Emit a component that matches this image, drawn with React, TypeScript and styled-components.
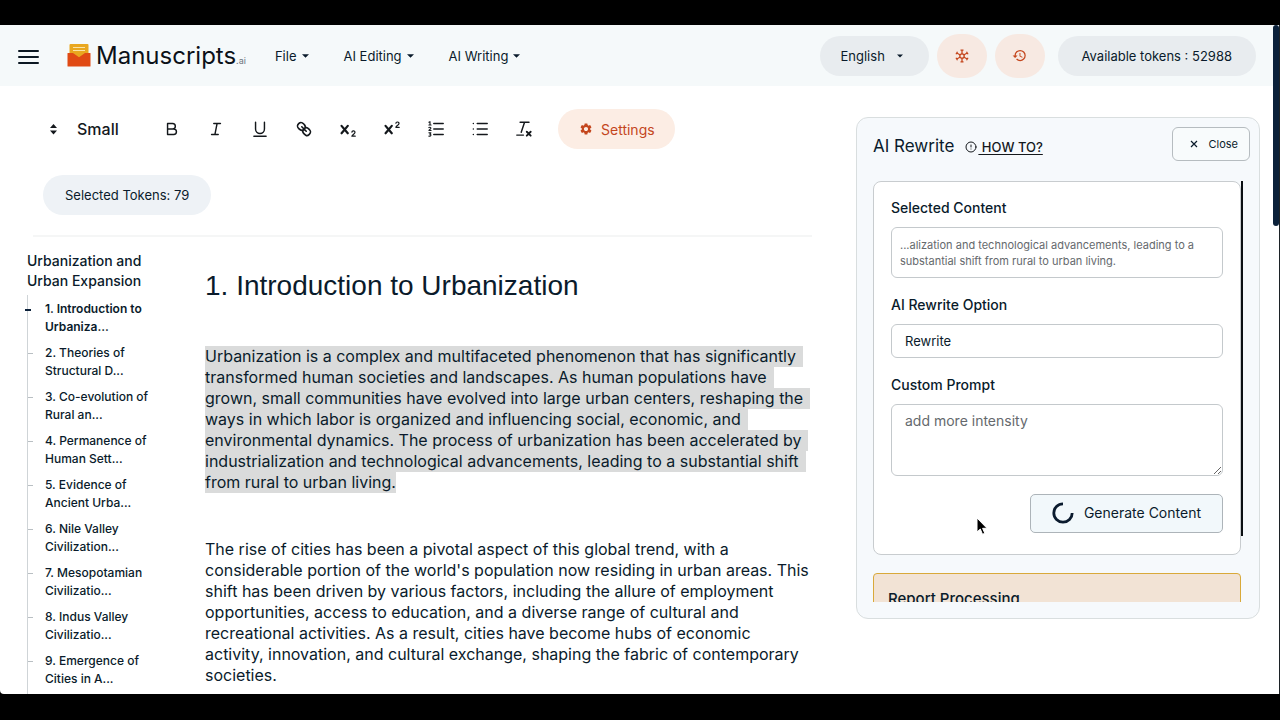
import React from "react";
import styled, { createGlobalStyle, css } from "styled-components";
import { MdHistory, MdSettings } from "react-icons/md";
import { LuCircleAlert } from "react-icons/lu";

const GlobalStyle = createGlobalStyle`
  *, *::before, *::after { box-sizing: border-box; }
  html, body, #root { height: 100%; }
  body {
    margin: 0;
    background: #000;
    color: #0a1b2b;
    font-family: Inter, "Liberation Sans", sans-serif;
    font-size: 14px;
  }
  button, select, textarea { font: inherit; color: inherit; }
  h1, h2, h3, p, ol { margin: 0; padding: 0; }
`;

const Screen = styled.div`
  height: 100vh;
  padding: 25px 0 26px;
`;

const Window = styled.div`
  position: relative;
  display: flex;
  height: 100%;
  overflow: hidden;
  background: #fff;
  border-bottom-left-radius: 4px;
  border-right: 1px solid #1c2226;
`;

const Page = styled.div`
  display: flex;
  flex-direction: column;
  flex: 1;
  min-width: 0;
`;

const ScrollTrack = styled.div`
  width: 6px;
`;

const ScrollThumb = styled.div`
  height: 30%;
  border-radius: 3px;
  background: #0b213a;
`;

const Header = styled.header`
  display: flex;
  align-items: center;
  flex: none;
  height: 61px;
  padding: 0 17px 0 18px;
  background: #f5f9fa;
`;

const MenuButton = styled.button`
  display: flex;
  flex-direction: column;
  gap: 4px;
  width: 21px;
  padding: 3px 0 0;
  border: 0;
  background: none;
  span { height: 2px; border-radius: 1px; background: #0b1722; }
`;

const Brand = styled.a`
  display: flex;
  align-items: center;
  gap: 5px;
  margin-left: 28px;
  color: #0b1118;
  text-decoration: none;
`;

const BrandName = styled.span`
  font-size: 24px;
  line-height: 32px;
`;

const BrandSuffix = styled.small`
  font-size: 9px;
  color: #6d767d;
`;

const Menus = styled.nav`
  display: flex;
  gap: 35px;
  margin-left: 29px;
`;

const MenuItem = styled.button`
  display: flex;
  align-items: center;
  gap: 5px;
  padding: 0;
  border: 0;
  background: none;
  font-size: 13px;
  line-height: 20px;
`;

const HeaderTools = styled.div`
  display: flex;
  align-items: center;
  gap: 8px;
  margin-left: auto;
`;

const pill = css`
  display: inline-flex;
  align-items: center;
  height: 40px;
  border: 0;
  border-radius: 20px;
  white-space: nowrap;
`;

const LanguagePill = styled.label`
  ${pill}
  gap: 11px;
  padding: 0 26px 0 21px;
  background: #e8ecef;
  font-size: 13px;
`;

const BareSelect = styled.select`
  appearance: none;
  padding: 0;
  border: 0;
  background: none;
`;

const RoundButton = styled.button`
  display: grid;
  place-items: center;
  width: 50px;
  height: 44px;
  padding: 0;
  border: 0;
  border-radius: 22px;
  background: #f7e9e2;
  color: #c4461d;
`;

const TokenPill = styled.output<{ $pale?: boolean }>`
  ${pill}
  margin-left: ${(p) => (p.$pale ? 0 : 5)}px;
  padding: 0 ${(p) => (p.$pale ? 22 : 24)}px;
  background: ${(p) => (p.$pale ? "#eef2f6" : "#e8ecef")};
  font-size: 13px;
`;

const Main = styled.main`
  display: flex;
  align-items: flex-start;
  gap: 35px;
  flex: 1;
  min-height: 0;
  padding: 0 13px 0 26px;
`;

const Editor = styled.section`
  flex: 1;
  min-width: 0;
`;

const ToolArea = styled.div`
  margin: 0 9px 0 7px;
  padding: 23px 16px 20px 10px;
  border-bottom: 2px solid #f5f6f6;
`;

const Toolbar = styled.div`
  display: flex;
  align-items: center;
  height: 40px;
  margin-bottom: 26px;
`;

const SizePicker = styled.label`
  display: flex;
  align-items: center;
  gap: 14px;
  width: 107px;
  color: #14181c;
  font-size: 16px;
  font-weight: 500;
`;

const Tools = styled.div`
  display: flex;
  align-items: center;
`;

const ToolButton = styled.button`
  display: grid;
  place-items: center;
  width: 44px;
  height: 24px;
  padding: 0;
  border: 0;
  background: none;
  color: #14181c;
`;

const SettingsButton = styled.button`
  ${pill}
  gap: 8px;
  margin-left: 12px;
  padding: 0 20px 0 21px;
  background: #fcede4;
  color: #c4461d;
`;

const Workspace = styled.div`
  display: flex;
  gap: 30px;
`;

const Outline = styled.nav`
  flex: 0 0 149px;
  padding-top: 14px;
`;

const OutlineTitle = styled.h2`
  max-width: 130px;
  padding-left: 1px;
  font-size: 14px;
  font-weight: 500;
  line-height: 20px;
`;

const OutlineList = styled.ol`
  display: flex;
  flex-direction: column;
  gap: 8px;
  margin: 4px 0 0 1px;
  padding: 5px 0 20px;
  border-left: 1px solid #cfd4d7;
  list-style: none;
`;

const OutlineItem = styled.li<{ $active?: boolean }>`
  position: relative;
  padding-left: 17px;
  font-size: 12px;
  font-weight: ${(p) => (p.$active ? 600 : 500)};
  line-height: 18px;
  &::before {
    content: "";
    position: absolute;
    top: 9px;
    left: ${(p) => (p.$active ? -3 : 0)}px;
    width: ${(p) => (p.$active ? 6 : 5)}px;
    height: ${(p) => (p.$active ? 2 : 1)}px;
    background: ${(p) => (p.$active ? "#0b213a" : "#b9bfc3")};
  }
  a { display: block; max-width: 115px; color: inherit; text-decoration: none; }
`;

const Article = styled.article`
  flex: 1;
  min-width: 0;
  padding-top: 31px;
  font-size: 16px;
  line-height: 21px;
  white-space: nowrap;
`;

const ArticleTitle = styled.h1`
  margin-bottom: 42px;
  font: 400 28px/36px "Liberation Sans", sans-serif;
`;

const Paragraph = styled.p`
  & + & { margin-top: 46px; }
`;

const Line = styled.span`
  display: block;
`;

const Selection = styled.mark`
  display: block;
  width: fit-content;
  padding-right: 7px;
  background: #dadbdb;
  color: inherit;
  &:last-child { padding-right: 0; }
`;

const Panel = styled.aside`
  position: relative;
  flex: 0 0 404px;
  margin-top: 31px;
  padding: 9px 16px 16px;
  border: 1px solid #d9dedf;
  border-radius: 12px;
  background: #f6f9fc;
`;

const PanelHeader = styled.div`
  display: flex;
  align-items: center;
  margin: 0 -7px 20px 0;
`;

const PanelTitle = styled.h2`
  padding-top: 4px;
  font-size: 17px;
  font-weight: 400;
  line-height: 24px;
`;

const HelpLink = styled.a`
  display: flex;
  align-items: center;
  gap: 1px;
  margin: 5px auto 0 11px;
  color: #14181c;
  font-size: 13px;
  font-weight: 500;
  text-decoration: none;
  span { text-decoration: underline; text-underline-offset: 2px; white-space: pre; }
`;

const CloseButton = styled.button`
  display: flex;
  align-items: center;
  gap: 10px;
  height: 34px;
  padding: 0 11px 0 17px;
  border: 1px solid #b6bcc0;
  border-radius: 6px;
  background: #f8fbfc;
  font-size: 11px;
`;

const PanelScroll = styled.div`
  display: flex;
  max-height: calc(100vh - 299px);
  overflow: hidden;
`;

const PanelContent = styled.div`
  flex: 1;
  min-width: 0;
`;

const PanelThumb = styled.div`
  flex: 0 0 2px;
  height: 355px;
  background: #0b0f13;
`;

const Card = styled.form`
  padding: 17px 17px 21px;
  border: 1px solid #c8cccf;
  border-radius: 8px;
  background: #fff;
`;

const FieldLabel = styled.label`
  display: block;
  margin-bottom: 10px;
  font-size: 14px;
  font-weight: 500;
  line-height: 18px;
`;

const fieldBox = css`
  display: block;
  width: 100%;
  margin-bottom: 18px;
  border: 1px solid #c4c9cc;
  border-radius: 6px;
  background: #fff;
`;

const Excerpt = styled.output`
  ${fieldBox}
  padding: 9px 8px 8px;
  color: #65696d;
  font-size: 11px;
  line-height: 16px;
`;

const OptionSelect = styled.select`
  ${fieldBox}
  appearance: none;
  height: 34px;
  padding: 0 13px;
  font-size: 13px;
`;

const PromptArea = styled.textarea`
  ${fieldBox}
  height: 72px;
  padding: 7px 13px;
  color: #65696d;
  font-size: 14px;
  line-height: 18px;
  resize: vertical;
`;

const GenerateButton = styled.button`
  display: flex;
  align-items: center;
  gap: 10px;
  height: 39px;
  margin-left: auto;
  padding: 0 21px 2px;
  border: 1px solid #adb4b9;
  border-radius: 5px;
  background: #f2f8fb;
`;

const Notice = styled.section`
  margin-top: 18px;
  padding: 14px;
  border: 1px solid #d9a93a;
  border-radius: 4px;
  background: #f2e3d5;
  h3 { font-size: 15px; font-weight: 500; line-height: 22px; }
`;

const Pointer = styled.svg`
  position: absolute;
  top: 399px;
  left: 119px;
`;

const Caret = ({ width = 7 }: { width?: number }) => (
  <svg width={width} height="4" viewBox="0 0 8 4" aria-hidden="true">
    <path d="M0 0h8L4 4z" fill="currentColor" />
  </svg>
);

const ToolIcon = ({ children }: { children: React.ReactNode }) => (
  <svg width="20" height="20" viewBox="0 0 18 18" fill="none" stroke="currentColor" strokeWidth="1.3" strokeLinecap="round" strokeLinejoin="round" aria-hidden="true">
    {children}
  </svg>
);

const Cross = <path strokeWidth="2" d="M3.200 6.200l5.600 6.600M8.800 6.200l-5.600 6.600" />;

const tools: { name: string; icon: React.ReactNode }[] = [
  { name: "Bold", icon: <path d="M5 4h4.500a2.500 2.500 0 0 1 0 5H5zM5 9h5.500a2.500 2.500 0 0 1 0 5H5z" /> },
  { name: "Italic", icon: <path d="M7 4h6M5 14h6M8 14l2-10" /> },
  { name: "Underline", icon: <path d="M5 3v6a4 4 0 0 0 8 0V3M3.500 15.500h11" /> },
  {
    name: "Link",
    icon: (
      <path strokeWidth="1.500" d="M7 7l4 4M8.900 4.577a3.476 3.476 0 0 1 .36 4.679A3.476 3.476 0 0 1 4.577 8.900C3.185 7.500 2.035 6.400 4.217 4.217S7.500 3.185 8.900 4.577ZM13.423 9.100a3.476 3.476 0 0 0-4.679-.36 3.476 3.476 0 0 0 .36 4.679c1.392 1.392 2.500 2.542 4.679.36S14.815 10.500 13.423 9.100Z" />
    ),
  },
  { name: "Subscript", icon: <>{Cross}<path d="M12.500 11.800a1.400 1.200 0 0 1 2.800.2c0 1.500-2.800 2.200-2.800 3.500h3" strokeWidth="1.100" /></> },
  { name: "Superscript", icon: <>{Cross}<path d="M12.500 3.800a1.400 1.200 0 0 1 2.800.2c0 1.500-2.800 2.200-2.800 3.500h3" strokeWidth="1.100" /></> },
  {
    name: "Numbered list",
    icon: (
      <>
        <path d="M7 4h8.500M7 9h8.500M7 14h8.500" />
        <path strokeWidth="1" d="M2.600 2.900l1-.5v3M2.600 5.400h2M2.600 7.700c1.200-.8 2.200.1 1.600 1L2.600 10.300h2M2.600 12.400h1.800l-1 1.200c1.600 0 1.300 2.200-.8 1.800" />
      </>
    ),
  },
  { name: "Bulleted list", icon: <path d="M6.500 4h9M6.500 9h9M6.500 14h9M3 4h.01M3 9h.01M3 14h.01" /> },
  { name: "Clear formatting", icon: <><path d="M5.500 3h8M6.500 12l3-9M2.500 14.500h6" /><path strokeWidth="1.700" d="M11.500 11.500l3.500 3.500M15 11.500l-3.500 3.500" /></> },
];

const outline = [
  "1. Introduction to Urbaniza...",
  "2. Theories of Structural D...",
  "3. Co-evolution of Rural an...",
  "4. Permanence of Human Sett...",
  "5. Evidence of Ancient Urba...",
  "6. Nile Valley Civilization...",
  "7. Mesopotamian Civilizatio...",
  "8. Indus Valley Civilizatio...",
  "9. Emergence of Cities in A...",
];

const selected = [
  "Urbanization is a complex and multifaceted phenomenon that has significantly",
  "transformed human societies and landscapes. As human populations have",
  "grown, small communities have evolved into large urban centers, reshaping the",
  "ways in which labor is organized and influencing social, economic, and",
  "environmental dynamics. The process of urbanization has been accelerated by",
  "industrialization and technological advancements, leading to a substantial shift",
  "from rural to urban living.",
];

const following = [
  "The rise of cities has been a pivotal aspect of this global trend, with a",
  "considerable portion of the world's population now residing in urban areas. This",
  "shift has been driven by various factors, including the allure of employment",
  "opportunities, access to education, and a diverse range of cultural and",
  "recreational activities. As a result, cities have become hubs of economic",
  "activity, innovation, and cultural exchange, shaping the fabric of contemporary",
  "societies.",
];

export default function App() {
  return (
    <>
      <GlobalStyle />
      <Screen>
        <Window>
          <Page>
            <Header>
              <MenuButton aria-label="Menu"><span /><span /><span /></MenuButton>
              <Brand href="#">
                <svg width="24" height="24" viewBox="0 0 24 24" aria-hidden="true">
                  <rect x="2.500" y="0" width="19" height="18" rx="1" fill="#e9a71f" />
                  <path d="M6 3.500h12M6 6.500h12" stroke="#fbe3a6" strokeWidth="1.200" />
                  <rect x="0.500" y="9" width="23" height="13.500" rx="0.500" fill="#e04a14" />
                  <path d="M6 8.900h12L12 13.200z" fill="#e9a71f" />
                </svg>
                <span><BrandName>Manuscripts</BrandName><BrandSuffix>.ai</BrandSuffix></span>
              </Brand>
              <Menus>
                {["File", "AI Editing", "AI Writing"].map((name) => (
                  <MenuItem key={name}>{name}<Caret /></MenuItem>
                ))}
              </Menus>
              <HeaderTools>
                <LanguagePill>
                  <BareSelect aria-label="Language"><option>English</option></BareSelect>
                  <Caret width={6} />
                </LanguagePill>
                <RoundButton aria-label="Network">
                  <svg width="14" height="14" viewBox="0 0 14 14" fill="none" stroke="currentColor" strokeWidth="1.300" aria-hidden="true">
                    <circle cx="7" cy="7" r="2.200" />
                    <path d="M7 5V1M5.500 1.200h3M7 9v4M5.500 12.800h3M5.300 6L1.800 4M8.700 8l3.500 2M8.700 6l3.500-2M5.300 8l-3.500 2M1 5.300L2.500 2.700M11.500 2.700L13 5.300M1 8.700l1.500 2.600M11.500 11.300L13 8.700" />
                  </svg>
                </RoundButton>
                <RoundButton aria-label="History"><MdHistory size={15} /></RoundButton>
                <TokenPill>Available tokens : 52988</TokenPill>
              </HeaderTools>
            </Header>
            <Main>
              <Editor>
                <ToolArea>
                  <Toolbar>
                    <SizePicker>
                      <svg width="20" height="20" viewBox="0 0 20 20" fill="currentColor" aria-hidden="true">
                        <path d="M10.500 5l3.500 4H7zM7 11.500h7l-3.500 4z" />
                      </svg>
                      <BareSelect aria-label="Text size"><option>Small</option></BareSelect>
                    </SizePicker>
                    <Tools>
                      {tools.map((tool) => (
                        <ToolButton key={tool.name} aria-label={tool.name}><ToolIcon>{tool.icon}</ToolIcon></ToolButton>
                      ))}
                    </Tools>
                    <SettingsButton><MdSettings size={14} />Settings</SettingsButton>
                  </Toolbar>
                  <TokenPill $pale>Selected Tokens: 79</TokenPill>
                </ToolArea>
                <Workspace>
                  <Outline>
                    <OutlineTitle>Urbanization and Urban Expansion</OutlineTitle>
                    <OutlineList>
                      {outline.map((item, i) => (
                        <OutlineItem key={item} $active={i === 0}><a href="#">{item}</a></OutlineItem>
                      ))}
                    </OutlineList>
                  </Outline>
                  <Article>
                    <ArticleTitle>1. Introduction to Urbanization</ArticleTitle>
                    <Paragraph>{selected.map((t) => <Selection key={t}>{t}</Selection>)}</Paragraph>
                    <Paragraph>{following.map((t) => <Line key={t}>{t}</Line>)}</Paragraph>
                  </Article>
                </Workspace>
              </Editor>
              <Panel>
                <PanelHeader>
                  <PanelTitle>AI Rewrite</PanelTitle>
                  <HelpLink href="#"><LuCircleAlert size={12} /><span> HOW TO?</span></HelpLink>
                  <CloseButton>
                    <svg width="8" height="8" viewBox="0 0 8 8" stroke="currentColor" strokeWidth="1.200" aria-hidden="true"><path d="M1 1l6 6M7 1L1 7" /></svg>
                    Close
                  </CloseButton>
                </PanelHeader>
                <PanelScroll>
                  <PanelContent>
                    <Card>
                      <FieldLabel htmlFor="excerpt">Selected Content</FieldLabel>
                      <Excerpt id="excerpt">...alization and technological advancements, leading to a substantial shift from rural to urban living.</Excerpt>
                      <FieldLabel htmlFor="option">AI Rewrite Option</FieldLabel>
                      <OptionSelect id="option"><option>Rewrite</option></OptionSelect>
                      <FieldLabel htmlFor="prompt">Custom Prompt</FieldLabel>
                      <PromptArea id="prompt" defaultValue="add more intensity" />
                      <GenerateButton type="button">
                        <svg width="22" height="22" viewBox="0 0 22 22" fill="none" aria-hidden="true">
                          <path d="M11 1.800A9.200 9.200 0 1 0 20.200 11" stroke="#0b1b2e" strokeWidth="2.800" />
                        </svg>
                        Generate Content
                      </GenerateButton>
                    </Card>
                    <Notice><h3>Report Processing</h3></Notice>
                  </PanelContent>
                  <PanelThumb />
                </PanelScroll>
                <Pointer width="12" height="19" viewBox="0 0 12 19" aria-hidden="true">
                  <path d="M1 1v14l3.300-3 2.200 5.300 2.300-1-2.200-5H11z" fill="#000" stroke="#fff" strokeWidth="1" />
                </Pointer>
              </Panel>
            </Main>
          </Page>
          <ScrollTrack><ScrollThumb /></ScrollTrack>
        </Window>
      </Screen>
    </>
  );
}
